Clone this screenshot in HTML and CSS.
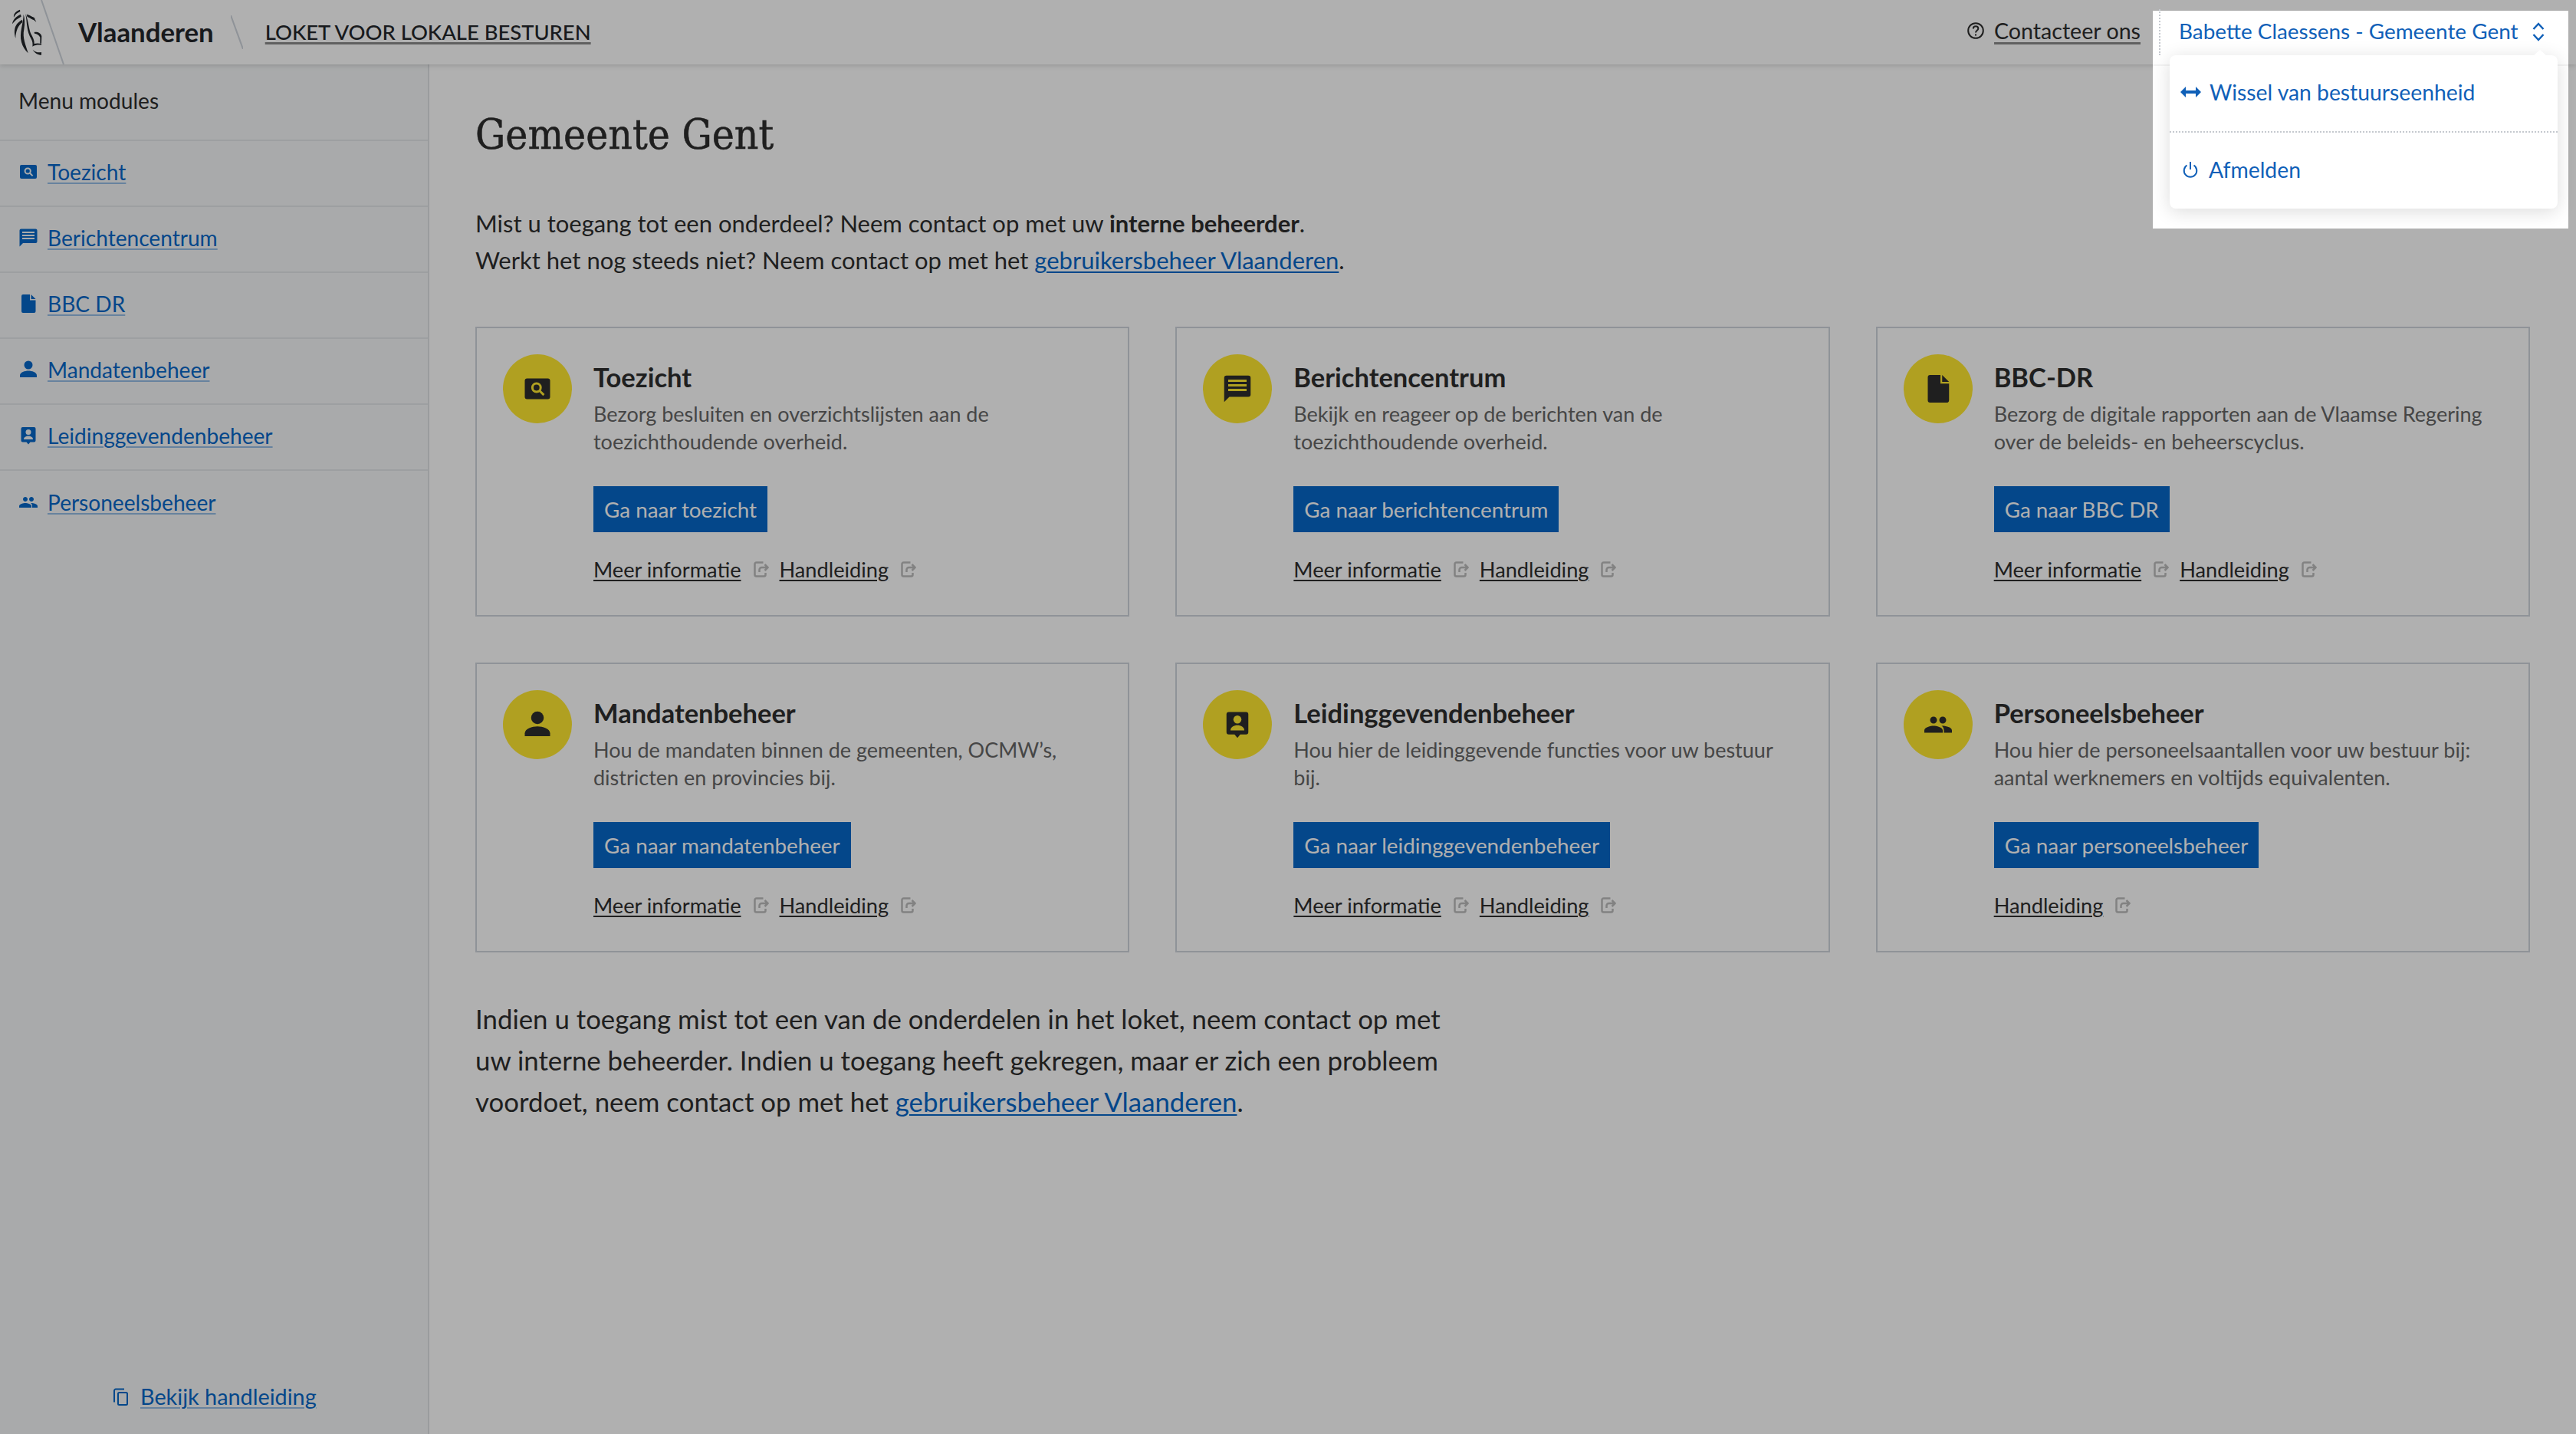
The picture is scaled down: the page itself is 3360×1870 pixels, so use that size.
FILE: index.html
```html
<!DOCTYPE html>
<html lang="nl">
<head>
<meta charset="utf-8">
<title>Loket voor lokale besturen</title>
<link rel="stylesheet" href="styles.css">
</head>
<body>
<svg class="defs" width="0" height="0" aria-hidden="true">
  <symbol id="i-search" viewBox="0 0 24 24"><rect x="1" y="3" width="22" height="18" rx="2"/><circle class="hole" cx="11.2" cy="11" r="3.6"/><path class="hole" d="M14 13.8l3.6 3.6"/></symbol>
  <symbol id="i-msg" viewBox="0 0 24 24"><path d="M2.5.5h19a2 2 0 0 1 2 2V17a2 2 0 0 1-2 2H5L.5 23.5v-21a2 2 0 0 1 2-2z"/><path class="hole" d="M4 5h16M4 9h16M4 13h16"/></symbol>
  <symbol id="i-doc" viewBox="0 0 24 24"><path d="M5 0h9v7.5h7.5V22a2 2 0 0 1-2 2H5a2 2 0 0 1-2-2V2a2 2 0 0 1 2-2z"/><path d="M15.5 0l6 6h-6z"/></symbol>
  <symbol id="i-person" viewBox="0 0 24 24"><circle cx="12" cy="6" r="5.5"/><path d="M1 22v-2.500c0-4 6.500-6 11-6s11 2 11 6V22z"/></symbol>
  <symbol id="i-lead" viewBox="0 0 24 24"><path d="M4.500 1h15a2 2 0 0 1 2 2v15.500a2 2 0 0 1-2 2h-5L12 23.500l-2.500-3h-5a2 2 0 0 1-2-2V3a2 2 0 0 1 2-2z"/><circle class="fillhole" cx="12" cy="7.500" r="3.500"/><path class="fillhole" d="M6 17c0-3 3-4.500 6-4.500s6 1.500 6 4.500z"/></symbol>
  <symbol id="i-team" viewBox="0 0 24 24"><path d="M16 11c1.660 0 3-1.340 3-3s-1.340-3-3-3-3 1.340-3 3 1.340 3 3 3zm-8 0c1.660 0 3-1.340 3-3S9.660 5 8 5 5 6.340 5 8s1.340 3 3 3zm0 2c-2.330 0-8 1.170-8 4v2h16v-2c0-2.830-5.670-4-8-4zm8 0c-.290 0-.620.020-.970.050 1.160.840 1.970 1.970 1.970 3.950v2h7v-2c0-2.830-5.670-4-8-4z"/></symbol>
  <symbol id="i-ext" viewBox="0 0 20 21"><path d="M12.500 1.500H3.500a2 2 0 0 0-2 2v14a2 2 0 0 0 2 2h10a2 2 0 0 0 2-2V15M7.500 14v-3a3 3 0 0 1 3-3H18M14.500 4l4 4-4 4"/></symbol>
</svg>

<header class="topbar">
  <svg class="logo" viewBox="0 0 84 84" width="84" height="84" aria-label="Vlaanderen logo">
    <path class="logo-slash" d="M54 0L83 84"/>
    <g class="lion" transform="scale(.3333)">
      <path d="M78 38C62 44 52 54 54 68C59 57 67 50 79 45Z"/>
      <path d="M81 56C64 64 50 76 48 94C57 81 69 72 83 65Z"/>
      <path d="M87 77C66 88 49 108 61 150C61 122 71 100 88 87Z"/>
      <path d="M92 56C92 92 74 128 84 165C88 181 98 196 110 208C101 176 87 150 94 115C98 92 97 72 92 56Z"/>
      <path d="M100 54C106 90 104 124 122 152C127 160 129 172 127 182C139 175 150 175 162 176L162 171C150 169 142 169 134 171C135 158 129 146 121 132C113 116 112 84 100 54Z"/>
      <path d="M104 56C120 60 136 68 142 86C132 77 118 71 107 66Z"/>
      <path d="M134 126C147 124 161 130 163 142L162 170L157 170L157 146C153 137 144 132 135 131Z"/>
      <path d="M128 194C138 204 150 207 162 204L162 215C148 215 136 208 128 194Z"/>
      <path d="M115 66C122 64 131 66 137 72C131 80 122 76 115 66Z"/>
    </g>
  </svg>
  <span class="brand">Vlaanderen</span>
  <svg class="slash" viewBox="0 0 16 44" width="16" height="44" aria-hidden="true"><path d="M0 0L16 44"/></svg>
  <a class="app-title" href="#">LOKET VOOR LOKALE BESTUREN</a>
  <a class="contact" href="#">
    <svg class="contact-icon" viewBox="0 0 22 22" width="22" height="22" aria-hidden="true"><circle cx="11" cy="11" r="9.800"/><path d="M7.800 8.500c0-2 1.500-3.200 3.300-3.200s3.200 1.200 3.200 3c0 2.500-3.300 2.500-3.300 5.200"/><path d="M11 15.500v2"/></svg>
    <span class="contact-text">Contacteer ons</span>
  </a>
</header>

<div class="shell">
  <aside class="sidebar">
    <div class="side-head">Menu modules</div>
    <nav class="side-nav">
      <a class="side-item" href="#"><svg class="ico"><use href="#i-search"/></svg><span>Toezicht</span></a>
      <a class="side-item" href="#"><svg class="ico"><use href="#i-msg"/></svg><span>Berichtencentrum</span></a>
      <a class="side-item" href="#"><svg class="ico"><use href="#i-doc"/></svg><span>BBC DR</span></a>
      <a class="side-item" href="#"><svg class="ico"><use href="#i-person"/></svg><span>Mandatenbeheer</span></a>
      <a class="side-item" href="#"><svg class="ico"><use href="#i-lead"/></svg><span>Leidinggevendenbeheer</span></a>
      <a class="side-item side-last" href="#"><svg class="ico"><use href="#i-team"/></svg><span>Personeelsbeheer</span></a>
    </nav>
    <a class="side-foot" href="#">
      <svg class="copy" viewBox="0 0 20 23" width="20" height="23" aria-hidden="true"><path d="M2 18.500V3.500a2 2 0 0 1 2-2h11"/><rect x="7" y="6" width="12" height="16" rx="1.500"/></svg>
      <span>Bekijk handleiding</span>
    </a>
  </aside>

  <main class="main">
    <h1 class="title">Gemeente Gent</h1>
    <p class="intro">Mist u toegang tot een onderdeel? Neem contact op met uw <strong>interne beheerder</strong>.<br>Werkt het nog steeds niet? Neem contact op met het <a class="inline" href="#">gebruikersbeheer Vlaanderen</a>.</p>

    <section class="cards">
      <article class="card">
        <div class="circle"><svg class="ico-lg"><use href="#i-search"/></svg></div>
        <div class="card-body">
          <h2 class="card-title">Toezicht</h2>
          <p class="card-text">Bezorg besluiten en overzichtslijsten aan de toezichthoudende overheid.</p>
          <a class="btn" href="#">Ga naar toezicht</a>
          <div class="links"><a href="#">Meer informatie</a><svg class="ext"><use href="#i-ext"/></svg><a href="#">Handleiding</a><svg class="ext"><use href="#i-ext"/></svg></div>
        </div>
      </article>
      <article class="card">
        <div class="circle"><svg class="ico-lg"><use href="#i-msg"/></svg></div>
        <div class="card-body">
          <h2 class="card-title">Berichtencentrum</h2>
          <p class="card-text">Bekijk en reageer op de berichten van de toezichthoudende overheid.</p>
          <a class="btn" href="#">Ga naar berichtencentrum</a>
          <div class="links"><a href="#">Meer informatie</a><svg class="ext"><use href="#i-ext"/></svg><a href="#">Handleiding</a><svg class="ext"><use href="#i-ext"/></svg></div>
        </div>
      </article>
      <article class="card">
        <div class="circle"><svg class="ico-lg"><use href="#i-doc"/></svg></div>
        <div class="card-body">
          <h2 class="card-title">BBC-DR</h2>
          <p class="card-text">Bezorg de digitale rapporten aan de Vlaamse Regering over de beleids- en beheerscyclus.</p>
          <a class="btn" href="#">Ga naar BBC DR</a>
          <div class="links"><a href="#">Meer informatie</a><svg class="ext"><use href="#i-ext"/></svg><a href="#">Handleiding</a><svg class="ext"><use href="#i-ext"/></svg></div>
        </div>
      </article>
      <article class="card">
        <div class="circle"><svg class="ico-lg"><use href="#i-person"/></svg></div>
        <div class="card-body">
          <h2 class="card-title">Mandatenbeheer</h2>
          <p class="card-text">Hou de mandaten binnen de gemeenten, OCMW’s, districten en provincies bij.</p>
          <a class="btn" href="#">Ga naar mandatenbeheer</a>
          <div class="links"><a href="#">Meer informatie</a><svg class="ext"><use href="#i-ext"/></svg><a href="#">Handleiding</a><svg class="ext"><use href="#i-ext"/></svg></div>
        </div>
      </article>
      <article class="card">
        <div class="circle"><svg class="ico-lg"><use href="#i-lead"/></svg></div>
        <div class="card-body">
          <h2 class="card-title">Leidinggevendenbeheer</h2>
          <p class="card-text">Hou hier de leidinggevende functies voor uw bestuur bij.</p>
          <a class="btn" href="#">Ga naar leidinggevendenbeheer</a>
          <div class="links"><a href="#">Meer informatie</a><svg class="ext"><use href="#i-ext"/></svg><a href="#">Handleiding</a><svg class="ext"><use href="#i-ext"/></svg></div>
        </div>
      </article>
      <article class="card">
        <div class="circle"><svg class="ico-lg"><use href="#i-team"/></svg></div>
        <div class="card-body">
          <h2 class="card-title">Personeelsbeheer</h2>
          <p class="card-text">Hou hier de personeelsaantallen voor uw bestuur bij: aantal werknemers en voltijds equivalenten.</p>
          <a class="btn" href="#">Ga naar personeelsbeheer</a>
          <div class="links"><a href="#">Handleiding</a><svg class="ext"><use href="#i-ext"/></svg></div>
        </div>
      </article>
    </section>

    <p class="outro">Indien u toegang mist tot een van de onderdelen in het loket, neem contact op met uw interne beheerder. Indien u toegang heeft gekregen, maar er zich een probleem voordoet, neem contact op met het <a class="inline" href="#">gebruikersbeheer Vlaanderen</a>.</p>
  </main>
</div>

<div class="overlay"></div>

<div class="user-pop">
  <span class="user-rule"></span>
  <span class="user-line"></span>
  <div class="user-row">
    <span>Babette Claessens - Gemeente Gent</span>
    <svg class="chev" viewBox="0 0 16 25" width="16" height="25" aria-hidden="true"><path d="M1.500 9L8 2l6.500 7M1.500 16L8 23l6.500-7"/></svg>
  </div>
  <div class="dropdown">
    <span class="caret"></span>
    <a class="drop-item drop-first" href="#">
      <svg class="swap" viewBox="0 0 27 14" width="27" height="14" aria-hidden="true"><path d="M0 7l7-7v5h13V0l7 7-7 7V9H7v5z"/></svg>
      <span>Wissel van bestuurseenheid</span>
    </a>
    <a class="drop-item" href="#">
      <svg class="power" viewBox="0 0 20 22" width="20" height="22" aria-hidden="true"><path d="M5.500 5.500a8.300 8.300 0 1 0 9 0M10 1v10"/></svg>
      <span>Afmelden</span>
    </a>
  </div>
</div>
</body>
</html>
```
FILE: styles.css
```css
* { box-sizing: border-box; }
html, body { margin: 0; padding: 0; }
body {
  width: 3360px;
  height: 1870px;
  overflow: hidden;
  position: relative;
  background: #fff;
  color: #2d2d2d;
  font-family: "Lato", "Noto Sans", sans-serif;
  font-size: 30px;
}
a { color: inherit; }
.defs { position: absolute; }

/* top bar */
.topbar {
  height: 84px;
  display: flex;
  align-items: center;
  background: #fff;
  position: relative;
  z-index: 2;
  box-shadow: 0 2px 6px rgba(0,0,0,.14);
  padding-right: 568px;
}
.logo { flex: none; }
.logo-slash { stroke: #cfd5dd; stroke-width: 2; fill: none; }
.lion path { fill: #23272b; }
.brand {
  margin: 0 0 2px 18px;
  font-size: 34.8px;
  font-weight: 700;
  color: #23272b;
}
.slash { margin-left: 22px; flex: none; }
.slash path { stroke: #cfd5dd; stroke-width: 2; fill: none; }
.app-title {
  margin: 0 0 1px 29px;
  font-size: 27.4px;
  font-weight: 500;
  color: #23272b;
  text-decoration: underline;
  text-decoration-color: #8c8c8c;
  text-decoration-thickness: 3px;
  text-underline-offset: 3px;
}
.contact {
  margin: 0 0 4px auto;
  display: flex;
  align-items: center;
  gap: 13px;
  font-size: 28.6px;
  color: #2d2d2d;
  text-decoration: none;
}
.contact-icon { fill: none; stroke: #2d2d2d; stroke-width: 2; }
.contact-text {
  text-decoration: underline;
  text-decoration-color: #8c8c8c;
  text-decoration-thickness: 3px;
  text-underline-offset: 4px;
}

/* layout */
.shell { display: flex; height: 1786px; }
.sidebar {
  width: 560px;
  flex: none;
  display: flex;
  flex-direction: column;
  background: #f5f7f8;
  border-right: 2px solid #dfe2e5;
  font-size: 28.1px;
}
.side-head {
  height: 100px;
  padding: 0 24px 4px;
  display: flex;
  align-items: center;
  border-bottom: 2px solid #e4e7ea;
  color: #2d2d2d;
}
.side-item {
  height: 86px;
  display: flex;
  align-items: center;
  gap: 13px;
  padding: 0 0 5px 25px;
  border-bottom: 2px solid #e4e7ea;
  color: #0767c8;
  text-decoration: none;
  --ico-bg: #f5f7f8;
}
.side-last { border-bottom: 0; }
.side-item span {
  text-decoration: underline;
  text-decoration-color: rgba(7,103,200,.4);
  text-decoration-thickness: 2px;
  text-underline-offset: 3px;
}
.ico { width: 24px; height: 24px; fill: currentColor; flex: none; }
.hole { fill: none; stroke: var(--ico-bg); stroke-width: 2; }
.fillhole { fill: var(--ico-bg); }
.side-foot {
  margin: auto 0 32px 147px;
  display: flex;
  align-items: center;
  gap: 16px;
  font-size: 28.8px;
  color: #0767c8;
  text-decoration: none;
}
.side-foot span {
  text-decoration: underline;
  text-decoration-color: rgba(7,103,200,.4);
  text-decoration-thickness: 2px;
  text-underline-offset: 3px;
}
.copy { fill: none; stroke: #0767c8; stroke-width: 2; flex: none; }

/* main */
.main { flex: 1; padding: 58px 60px 0; min-width: 0; }
.title {
  margin: 0;
  font-family: "DejaVu Serif Condensed", "DejaVu Serif", serif;
  font-weight: 400;
  font-size: 54.7px;
  line-height: 66px;
  color: #2d2d2d;
  -webkit-text-stroke: .5px #2d2d2d;
}
.intro {
  margin: 59px 0 0;
  font-size: 31px;
  line-height: 48px;
}
.intro strong { font-weight: 700; }
.inline {
  color: #0767c8;
  text-decoration: underline;
  text-decoration-thickness: 2px;
  text-underline-offset: 3px;
}
.cards {
  margin-top: 63px;
  display: grid;
  grid-template-columns: repeat(3, 1fr);
  grid-auto-rows: 378px;
  column-gap: 60px;
  row-gap: 60px;
}
.card {
  border: 2px solid #cfd5dd;
  padding: 34px;
  display: flex;
  gap: 28px;
}
.circle {
  width: 90px;
  height: 90px;
  flex: none;
  border-radius: 50%;
  background: #ffe830;
  display: flex;
  align-items: center;
  justify-content: center;
  color: #2d2d2d;
  --ico-bg: #ffe830;
}
.ico-lg { width: 36px; height: 36px; fill: currentColor; }
.card-body { flex: 1; min-width: 0; padding-top: 12px; }
.card-title {
  margin: 0;
  font-size: 34.5px;
  line-height: 36px;
  font-weight: 700;
  color: #2d2d2d;
}
.card-text {
  margin: 12px 0 0;
  max-width: 650px;
  font-size: 27px;
  line-height: 36px;
  color: #666;
}
.btn {
  margin-top: 40px;
  display: inline-flex;
  align-items: center;
  height: 60px;
  padding: 0 14px;
  background: #0767c8;
  color: #fff;
  font-size: 27.8px;
  text-decoration: none;
}
.links {
  margin-top: 30px;
  display: flex;
  align-items: center;
  height: 36px;
  font-size: 27.2px;
}
.links a {
  color: #2d2d2d;
  text-decoration: underline;
  text-decoration-thickness: 2px;
  text-underline-offset: 3px;
}
.ext {
  width: 20px;
  height: 21px;
  margin: 0 14px 0 16px;
  fill: none;
  stroke: #bdbdbd;
  stroke-width: 2.5;
  flex: none;
}
.outro {
  margin: 60px 0 0;
  width: 1290px;
  font-size: 34.8px;
  line-height: 54px;
}

/* overlay and user menu */
.overlay {
  position: absolute;
  inset: 0;
  background: rgba(0,0,0,.31);
  z-index: 5;
}
.user-pop {
  position: absolute;
  left: 2808px;
  top: 14px;
  width: 542px;
  height: 284px;
  background: #fff;
  z-index: 6;
  color: #1060b8;
  font-size: 28.3px;
}
.user-rule {
  position: absolute;
  left: 8px;
  top: -2px;
  height: 60px;
  border-left: 2px dotted #c5c9cf;
}
.user-line {
  position: absolute;
  left: 0;
  right: 0;
  top: 70px;
  height: 2px;
  background: #f3f3f3;
}
.user-row {
  height: 52px;
  margin-bottom: 6px;
  padding: 0 31px 0 34px;
  display: flex;
  align-items: center;
  justify-content: space-between;
  font-size: 27.9px;
}
.chev { fill: none; stroke: #1060b8; stroke-width: 2.500; flex: none; margin-top: 2px; }
.dropdown {
  position: relative;
  margin-left: 22px;
  width: 506px;
  height: 200px;
  background: #fff;
  border-radius: 8px;
  box-shadow: 0 4px 24px rgba(0,0,0,.14);
}
.caret {
  position: absolute;
  right: 14px;
  top: -7px;
  width: 0;
  height: 0;
  border-left: 9px solid transparent;
  border-right: 9px solid transparent;
  border-bottom: 8px solid #fff;
}
.drop-item {
  height: 100px;
  padding: 0 0 5px 14px;
  display: flex;
  align-items: center;
  gap: 11px;
  color: #1060b8;
  text-decoration: none;
}
.drop-first { border-bottom: 2px dotted #c5c9cf; height: 101px; padding-bottom: 3px; }
.swap { fill: #1060b8; flex: none; }
.power { fill: none; stroke: #1060b8; stroke-width: 2; flex: none; margin: 0 3px; }
```
